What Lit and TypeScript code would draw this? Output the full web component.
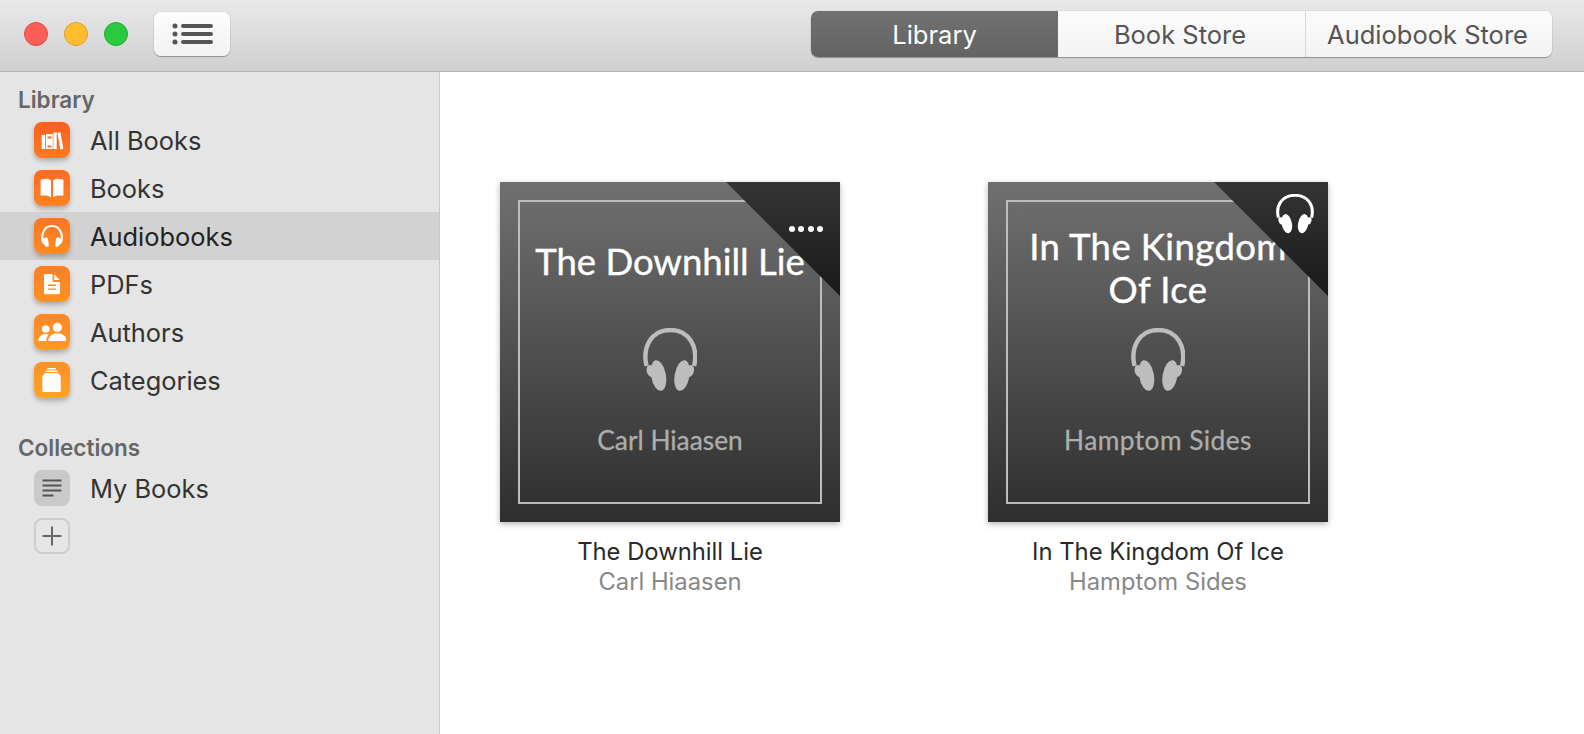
import { LitElement, html, css, svg } from "lit";
import { customElement } from "lit/decorators.js";

const icons: Record<string, unknown> = {
  all: svg`<g fill="#fff"><rect x="7.7" y="13" width="3.4" height="14"/><path fill-rule="evenodd" d="M12 12h6.8v15H12zM13.4 14.5v2h4v-2zM13.4 23.5v2h4v-2z"/><rect x="19.4" y="10.3" width="3.3" height="16.7"/><path d="M23.4 11l3-.8 3 16.6-3 .6z"/></g>`,
  book: svg`<path fill="#fff" d="M17 10.5v16.8c-2.5-1.8-6-2.2-10.4-1.6V9.8C11 8 15 8.4 17 10.5zM19 10.5v16.8c2.5-1.8 6-2.2 10.4-1.6V9.8C25 8 21 8.4 19 10.5z"/>`,
  audio: svg`<path fill="none" stroke="#fff" stroke-width="2.2" d="M9.4 24C6.8 20 8.2 8 18 8s11.2 12 8.6 16"/><path fill="#fff" d="M11.4 19.4c1.6-.4 2.6 1 2.8 3l.6 4.8c.2 1.6-2.2 2.4-3.2 1L8.4 25c-1-1.8-.8-3.2.4-4zM24.6 19.4c-1.6-.4-2.6 1-2.8 3l-.6 4.8c-.2 1.6 2.2 2.4 3.2 1l3.2-3.2c1-1.8.8-3.2-.4-4z"/>`,
  pdf: svg`<path fill="#fff" fill-rule="evenodd" d="M11.2 8h7.3v6.4a1.6 1.6 0 0 0 1.6 1.6H26v10.8a1.4 1.4 0 0 1-1.4 1.4H11.4A1.4 1.4 0 0 1 10 26.8V9.2A1.2 1.2 0 0 1 11.2 8zM20.2 8.3L25.8 14h-5.6zM14 18.6v1.3h8v-1.3zM14 22.4v1.3h8v-1.3z"/>`,
  authors: svg`<g fill="#fff"><circle cx="23.3" cy="13.4" r="4.6"/><circle cx="11.7" cy="15" r="3.8"/><path d="M14.6 27c-.6-3.800 3-7.800 8.700-7.800s10.200 4 8.300 7.800zM4.400 27c-.2-3.400 2.600-7 7.300-7 1.100 0 2.100.2 3 .5-1.700 1.700-2.500 4-2.300 6.500z"/></g>`,
  cat: svg`<g fill="#fff"><rect x="13" y="6" width="9" height="1.600" rx=".8"/><rect x="11.500" y="8.600" width="12" height="1.500" rx=".7"/><path d="M12.800 11h9.400c2.500 0 4.500 2 4.500 4.500v13A1.500 1.500 0 0 1 25.200 30H9.800a1.500 1.500 0 0 1-1.500-1.500v-13C8.300 13 10.300 11 12.800 11z"/></g>`,
};

const phones = svg`
  <path fill="none" stroke="currentColor" stroke-width="4.400" d="M3.500 38C-1 18 9 2 27.300 2S55.600 18 51.100 38"/>
  <g fill="currentColor">
    <ellipse cx="15.500" cy="47.500" rx="7.400" ry="15.500" transform="rotate(-10 15.500 47.500)"/>
    <ellipse cx="39.100" cy="47.500" rx="7.400" ry="15.500" transform="rotate(10 39.100 47.500)"/>
    <ellipse cx="7.500" cy="43" rx="3.800" ry="6" transform="rotate(-15 7.500 43)"/>
    <ellipse cx="47.100" cy="43" rx="3.800" ry="6" transform="rotate(15 47.100 43)"/>
  </g>`;

const library = [
  { key: "all", label: "All Books", top: "#fb5f1f", bottom: "#fe7a22" },
  { key: "book", label: "Books", top: "#fd6b21", bottom: "#fe8224" },
  { key: "audio", label: "Audiobooks", top: "#fd7522", bottom: "#fe8b25", selected: true },
  { key: "pdf", label: "PDFs", top: "#fd7e23", bottom: "#fe9226" },
  { key: "authors", label: "Authors", top: "#fd8724", bottom: "#fe9a27" },
  { key: "cat", label: "Categories", top: "#fe9025", bottom: "#ffa428" },
];

const shelf = [
  { title: ["The Downhill Lie"], author: "Carl Hiaasen", badge: "dots" },
  { title: ["In The Kingdom", "Of Ice"], author: "Hamptom Sides", badge: "phones" },
];

@customElement("app-root")
export class AppRoot extends LitElement {
  static styles = css`
    :host {
      display: flex;
      flex-direction: column;
      height: 734px;
      overflow: hidden;
      background: #fff;
      font-family: Inter, "Liberation Sans", sans-serif;
    }
    .toolbar {
      flex: none;
      height: 68px;
      display: flex;
      align-items: center;
      padding: 0 32px 3px 24px;
      border-bottom: 1px solid #b4b4b4;
      background: linear-gradient(#e9e9e9, #cfcfcf);
    }
    .lights { display: flex; gap: 16px; }
    .light { width: 24px; height: 24px; border-radius: 50%; box-sizing: border-box; }
    .red { background: #fd5f57; border: 1px solid #e5483f; }
    .yellow { background: #febc2e; border: 1px solid #e0a02a; }
    .green { background: #2bc840; border: 1px solid #22ad34; }
    .list-btn {
      margin-left: 26px;
      width: 76px;
      height: 44px;
      box-sizing: border-box;
      padding-left: 2px;
      border-radius: 7px;
      background: linear-gradient(#fdfdfd, #f2f2f2);
      box-shadow: 0 1px 1px rgba(0, 0, 0, 0.3), 0 0 0 0.5px rgba(0, 0, 0, 0.08);
      display: flex;
      align-items: center;
      justify-content: center;
    }
    .tabs {
      margin-left: auto;
      display: flex;
      height: 46px;
      width: 741px;
      border-radius: 7px;
      overflow: hidden;
      box-shadow: 0 1px 1px rgba(0, 0, 0, 0.3), 0 0 0 0.5px rgba(0, 0, 0, 0.08);
      font-size: 25.500px;
    }
    .tab {
      display: flex;
      align-items: center;
      justify-content: center;
      color: #555;
      background: linear-gradient(#fcfcfc, #f3f3f3);
    }
    .tab.active { width: 247px; color: #fff; background: linear-gradient(#717171, #636363); }
    .tab.mid { width: 248px; border-right: 1px solid #d8d8d8; box-sizing: border-box; padding-right: 3px; }
    .tab.last { flex: 1; padding-right: 3px; }
    .main { flex: 1; display: flex; min-height: 0; }
    .sidebar {
      flex: none;
      width: 439px;
      background: #e5e5e5;
      border-right: 1px solid #c9c9c9;
      padding-top: 13px;
    }
    .heading {
      height: 31px;
      line-height: 30px;
      padding-left: 18px;
      font-size: 22.500px;
      font-weight: 600;
      color: #666;
    }
    .heading.second { margin-top: 29px; }
    .row {
      height: 48px;
      display: flex;
      align-items: center;
      gap: 20px;
      padding-left: 34px;
      font-size: 25.400px;
      color: #333;
    }
    .row span { padding-top: 1px; }
    .row.selected { background: #d2d2d2; color: #222; }
    .icon {
      width: 36px;
      height: 36px;
      border-radius: 8px;
      box-shadow: 0 3px 5px rgba(0, 0, 0, 0.25);
      flex: none;
    }
    .icon svg { display: block; }
    .icon.plain { background: #cacaca; box-shadow: none; }
    .icon.add { box-sizing: border-box; border: 2px solid #cdcdcd; box-shadow: none; }
    .content { flex: 1; display: flex; gap: 148px; padding: 110px 0 0 60px; align-items: flex-start; }
    .item { width: 340px; text-align: center; }
    .cover {
      position: relative;
      width: 340px;
      height: 340px;
      box-sizing: border-box;
      padding: 18px;
      overflow: hidden;
      color: #fff;
      background: linear-gradient(#707070, #2e2e2e);
      box-shadow: 0 2px 6px rgba(0, 0, 0, 0.3);
      font-family: Lato, "Noto Sans", sans-serif;
    }
    .frame {
      height: 100%;
      box-sizing: border-box;
      border: 2px solid #bdbdbd;
      display: flex;
      flex-direction: column;
      align-items: center;
    }
    .cover-title {
      height: 126px;
      box-sizing: border-box;
      font-size: 36.500px;
      line-height: 43px;
      white-space: nowrap;
      -webkit-text-stroke: 0.4px #fff;
    }
    .cover-title.one { padding-top: 38px; }
    .cover-title.two { padding-top: 23px; letter-spacing: 0.4px; }
    .cover-phones { color: #bdbdbd; display: block; }
    .cover-author {
      margin-top: 31px;
      font-size: 26.300px;
      line-height: 34px;
      color: #adadad;
      -webkit-text-stroke: 0.3px #adadad;
    }
    .cover-author.wide { letter-spacing: 0.45px; }
    .corner {
      position: absolute;
      top: 0;
      right: 0;
      width: 114px;
      height: 114px;
      background: linear-gradient(#343434, #1a1a1a);
      clip-path: polygon(0 0, 100% 0, 100% 100%);
    }
    .dots { position: absolute; top: 44px; right: 17px; display: flex; gap: 3.500px; }
    .dots i { width: 6px; height: 6px; border-radius: 50%; background: #fff; display: block; }
    .badge-phones { position: absolute; top: 12px; right: 14px; color: #fff; display: block; }
    .name { margin-top: 15px; font-size: 23.800px; line-height: 30px; color: #2a2a2a; }
    .by { font-size: 23.800px; line-height: 30px; color: #888; }
  `;

  private renderRow(r: (typeof library)[number]) {
    const bg = `background: linear-gradient(${r.top}, ${r.bottom})`;
    return html`<div class="row ${r.selected ? "selected" : ""}">
      <div class="icon" style=${bg}>
        <svg width="36" height="36" viewBox="0 0 36 36">${icons[r.key]}</svg>
      </div>
      <span>${r.label}</span>
    </div>`;
  }

  private renderBook(b: (typeof shelf)[number]) {
    const two = b.title.length > 1;
    return html`<div class="item">
      <div class="cover">
        <div class="frame">
          <div class="cover-title ${two ? "two" : "one"}">
            ${b.title.map((l) => html`<div>${l}</div>`)}
          </div>
          <svg class="cover-phones" width="54.600" height="64" viewBox="0 0 54.600 64">${phones}</svg>
          <div class="cover-author ${two ? "wide" : ""}">${b.author}</div>
        </div>
        <div class="corner"></div>
        ${b.badge === "dots"
          ? html`<div class="dots"><i></i><i></i><i></i><i></i></div>`
          : html`<svg class="badge-phones" width="38" height="40" viewBox="0 0 54.600 64" preserveAspectRatio="none">${phones}</svg>`}
      </div>
      <div class="name">${b.title.join(" ")}</div>
      <div class="by">${b.author}</div>
    </div>`;
  }

  render() {
    return html`
      <div class="toolbar">
        <div class="lights">
          <div class="light red"></div>
          <div class="light yellow"></div>
          <div class="light green"></div>
        </div>
        <div class="list-btn">
          <svg width="42" height="24" viewBox="0 0 42 24" fill="#555">
            <circle cx="3" cy="4" r="2.500" /><circle cx="3" cy="12" r="2.500" /><circle cx="3" cy="20" r="2.500" />
            <rect x="9" y="2" width="32" height="4" rx="2" />
            <rect x="9" y="10" width="32" height="4" rx="2" />
            <rect x="9" y="18" width="32" height="4" rx="2" />
          </svg>
        </div>
        <div class="tabs">
          <div class="tab active">Library</div>
          <div class="tab mid">Book Store</div>
          <div class="tab last">Audiobook Store</div>
        </div>
      </div>
      <div class="main">
        <div class="sidebar">
          <div class="heading">Library</div>
          ${library.map((r) => this.renderRow(r))}
          <div class="heading second">Collections</div>
          <div class="row">
            <div class="icon plain">
              <svg width="36" height="36" viewBox="0 0 36 36" stroke="#555" stroke-width="1.800" fill="none">
                <path d="M8.500 10.500h19M8.500 15.500h19M8.500 20.500h19M8.500 25.500h11" />
              </svg>
            </div>
            <span>My Books</span>
          </div>
          <div class="row">
            <div class="icon add">
              <svg width="32" height="32" viewBox="0 0 32 32" stroke="#666" stroke-width="2" fill="none">
                <path d="M6.500 16h19M16 6.500v19" />
              </svg>
            </div>
          </div>
        </div>
        <div class="content">${shelf.map((b) => this.renderBook(b))}</div>
      </div>
    `;
  }
}
